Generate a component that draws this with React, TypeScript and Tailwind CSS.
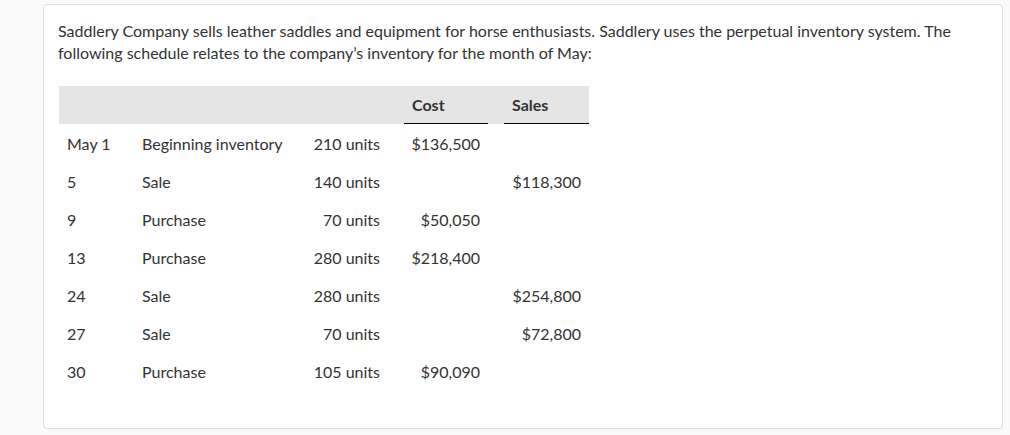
import React from "react";

const rows = [
  ["May 1", "Beginning inventory", "210 units", "$136,500", ""],
  ["5", "Sale", "140 units", "", "$118,300"],
  ["9", "Purchase", "70 units", "$50,050", ""],
  ["13", "Purchase", "280 units", "$218,400", ""],
  ["24", "Sale", "280 units", "", "$254,800"],
  ["27", "Sale", "70 units", "", "$72,800"],
  ["30", "Purchase", "105 units", "$90,090", ""],
];

export default function App() {
  return (
    <div
      className="w-[1010px] h-[435px] bg-[#fafafa] pt-[4px] pl-[43px] text-[#333333]"
      style={{ fontFamily: "Lato, 'Noto Sans', sans-serif" }}
    >
      <div className="w-[960px] h-[425px] bg-white border border-[#dddddd] rounded-[4px] pl-[14px] pt-[15px]">
        <p className="text-[16px] leading-[22px] w-[900px]">
          Saddlery Company sells leather saddles and equipment for horse enthusiasts. Saddlery uses the perpetual inventory system. The following schedule relates to the company’s inventory for the month of May:
        </p>
        <div className="mt-[22px] ml-[1px] w-[530px] text-[16px]">
          <div className="flex h-[38px] bg-[#e5e5e5] font-bold">
            <div className="w-[75px]" />
            <div className="w-[172px]" />
            <div className="w-[82px]" />
            <div className="w-[16px]" />
            <div className="w-[84px] border-b border-black flex items-center px-2 pt-[1px]">Cost</div>
            <div className="w-[16px]" />
            <div className="w-[85px] border-b border-black flex items-center px-2 pt-[1px]">Sales</div>
          </div>
          {rows.map((r, i) => (
            <div key={i} className="flex h-[38px] items-center pt-[1px] whitespace-nowrap">
              <div className="w-[75px] px-2">{r[0]}</div>
              <div className="w-[172px] px-2">{r[1]}</div>
              <div className="w-[82px] pr-2 flex justify-end">{r[2]}</div>
              <div className="w-[16px]" />
              <div className="w-[84px] pr-2 flex justify-end">{r[3]}</div>
              <div className="w-[16px]" />
              <div className="w-[85px] pr-2 flex justify-end">{r[4]}</div>
            </div>
          ))}
        </div>
      </div>
    </div>
  );
}
